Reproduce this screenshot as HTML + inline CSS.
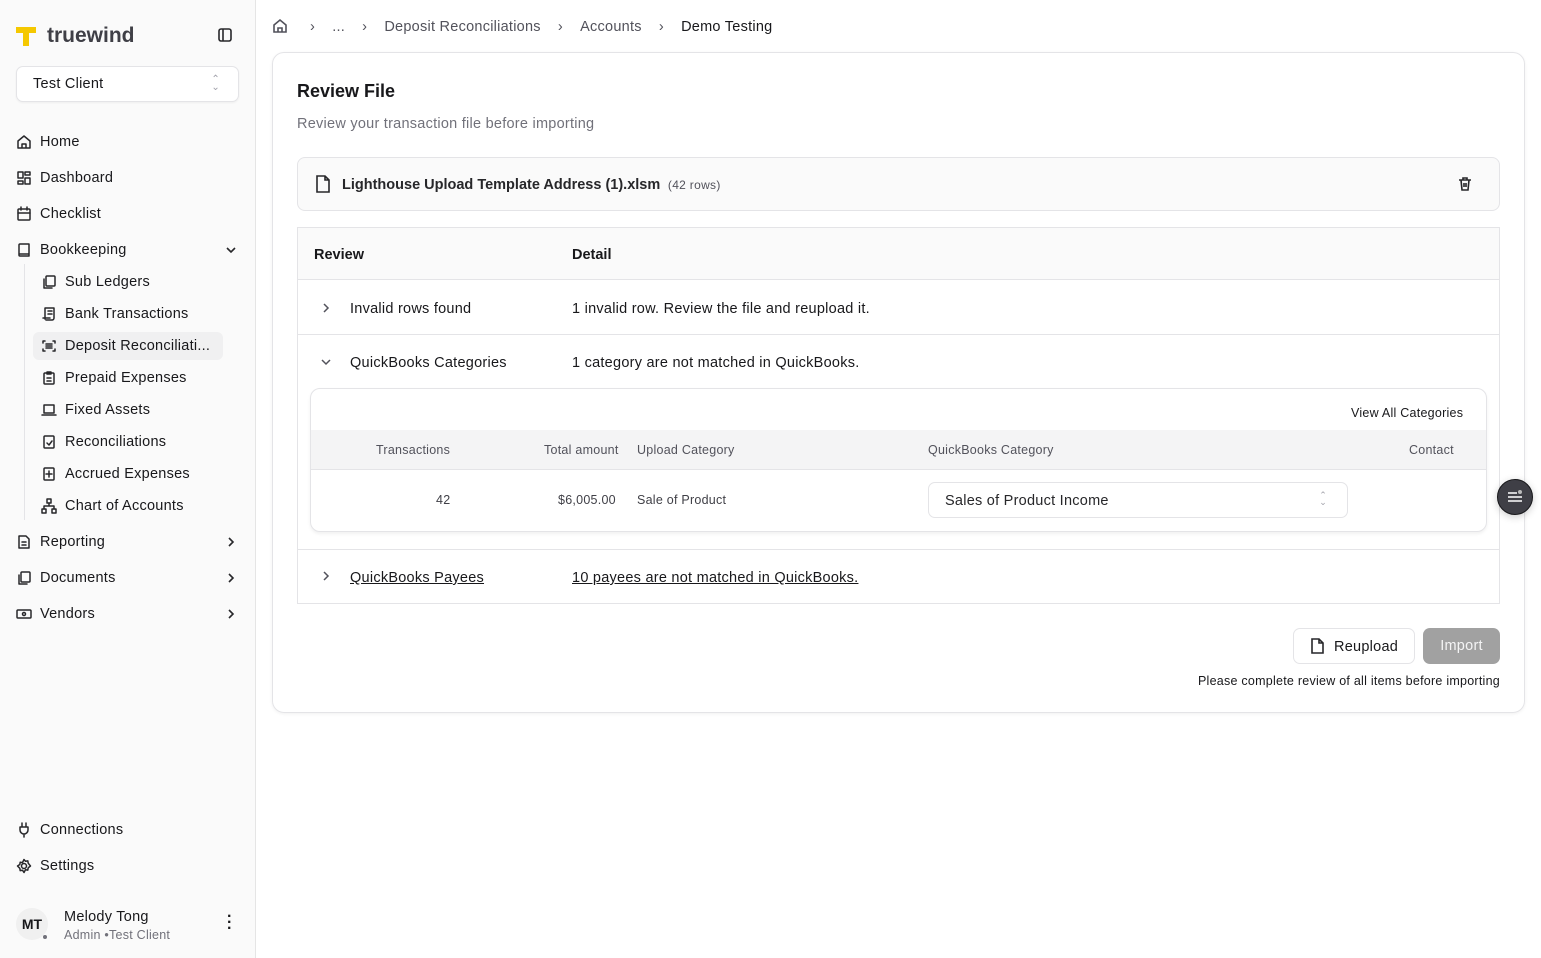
<!DOCTYPE html>
<html><head><meta charset="utf-8"><style>
*{box-sizing:border-box;margin:0;padding:0}
body{width:1541px;height:958px;font-family:"Liberation Sans",sans-serif;color:#18181b;background:#fff;position:relative;overflow:hidden;font-size:14px;letter-spacing:0.25px}
.t,.nav,.bc{margin-top:1px}
.sb{position:absolute;left:0;top:0;width:256px;height:958px;background:#fafafa;border-right:1px solid #e5e5e5}
.logo{position:absolute;left:15px;top:24px;display:flex;align-items:center}
.logo span{font-size:21px;font-weight:bold;color:#3f3f46;margin-left:10px;letter-spacing:0}
.sel{position:absolute;left:16px;top:66px;width:223px;height:36px;background:#fff;border:1px solid #e4e4e7;border-radius:7px;box-shadow:0 1px 2px rgba(0,0,0,.05);padding:9px 16px;font-size:14.5px}
.nav{position:absolute;left:16px;display:flex;align-items:center;font-size:14.5px;color:#18181b}
.nav svg{width:16px;height:16px;margin-right:8px;fill:none;stroke:#27272a;stroke-width:1.5;stroke-linecap:round;stroke-linejoin:round}
.chev{position:absolute;left:224px;width:14px;height:14px;fill:none;stroke:#27272a;stroke-width:1.6}
.sub{left:41px}
.main{position:absolute;left:272px;top:52px;width:1253px;height:661px;border:1px solid #e4e4e7;border-radius:12px;box-shadow:0 1px 3px rgba(0,0,0,.06)}
.bc{position:absolute;top:18px;font-size:14.5px;color:#52525b}
.t{position:absolute;white-space:nowrap}
</style></head><body>
<div class="sb">
<div class="logo"><svg width="22" height="22" viewBox="0 0 22 22"><path d="M1 2h20v6h-7v13h-6V8H1z" fill="#f5c800"/></svg><span>truewind</span></div>
<svg style="position:absolute;left:217px;top:27px" width="16" height="16" viewBox="0 0 16 16" fill="none" stroke="#27272a" stroke-width="1.6"><rect x="2" y="2" width="12" height="12" rx="2"/><path d="M6 2v12"/></svg>
<div class="sel">Test Client<span style="position:absolute;right:18px;top:9px;color:#a1a1aa;font-size:10px;line-height:8px">⌃<br>⌄</span></div>
<div class="nav" style="top:133px"><svg viewBox="0 0 16 16"><path d="M2 7l6-5 6 5v7H2z M6 14v-4h4v4"/></svg>Home</div>
<div class="nav" style="top:169px"><svg viewBox="0 0 16 16"><rect x="2" y="2" width="5" height="6"/><rect x="9" y="2" width="5" height="3"/><rect x="9" y="8" width="5" height="6"/><rect x="2" y="11" width="5" height="3"/></svg>Dashboard</div>
<div class="nav" style="top:205px"><svg viewBox="0 0 16 16"><rect x="2" y="3" width="12" height="11" rx="1"/><path d="M5 1v3M11 1v3M2 7h12"/></svg>Checklist</div>
<div class="nav" style="top:241px"><svg viewBox="0 0 16 16"><path d="M3 13V3a1 1 0 011-1h9v12H4a1 1 0 01-1-1zM3 12h10"/></svg>Bookkeeping</div>
<svg class="chev" style="top:243px" viewBox="0 0 14 14"><path d="M3 5l4 4 4-4"/></svg>
<div style="position:absolute;left:24px;top:264px;width:1px;height:256px;background:#e4e4e7"></div>
<div style="position:absolute;left:33px;top:332px;width:190px;height:28px;background:#f0f0f1;border-radius:6px"></div>
<div class="nav sub" style="top:273px"><svg viewBox="0 0 16 16"><rect x="5" y="2" width="9" height="10" rx="1"/><path d="M3 5v9h8"/></svg>Sub Ledgers</div>
<div class="nav sub" style="top:305px"><svg viewBox="0 0 16 16"><path d="M4 2h9v10a2 2 0 01-2 2H5M4 2v11M7 5h4M7 8h4M2 12h7"/></svg>Bank Transactions</div>
<div class="nav sub" style="top:337px"><svg viewBox="0 0 16 16"><path d="M2 5V3h2M12 3h2v2M14 11v2h-2M4 13H2v-2M5 6h6M5 8h6M5 10h6"/></svg>Deposit Reconciliati...</div>
<div class="nav sub" style="top:369px"><svg viewBox="0 0 16 16"><rect x="3" y="3" width="10" height="11" rx="1"/><path d="M6 2h4v2H6zM6 8h4M6 11h4"/></svg>Prepaid Expenses</div>
<div class="nav sub" style="top:401px"><svg viewBox="0 0 16 16"><rect x="3" y="3" width="10" height="8"/><path d="M1 13h14"/></svg>Fixed Assets</div>
<div class="nav sub" style="top:433px"><svg viewBox="0 0 16 16"><rect x="3" y="2" width="10" height="12" rx="1"/><path d="M6 9l2 2 3-4"/></svg>Reconciliations</div>
<div class="nav sub" style="top:465px"><svg viewBox="0 0 16 16"><rect x="3" y="2" width="10" height="12" rx="1"/><path d="M8 5v6M5 8h6"/></svg>Accrued Expenses</div>
<div class="nav sub" style="top:497px"><svg viewBox="0 0 16 16"><rect x="6" y="1" width="4" height="4"/><rect x="1" y="11" width="4" height="4"/><rect x="11" y="11" width="4" height="4"/><path d="M3 11V8h10v3M8 5v3"/></svg>Chart of Accounts</div>
<div class="nav" style="top:533px"><svg viewBox="0 0 16 16"><path d="M3 2h7l3 3v9H3z M6 8h4M6 11h4"/></svg>Reporting</div>
<svg class="chev" style="top:535px" viewBox="0 0 14 14"><path d="M5 3l4 4-4 4"/></svg>
<div class="nav" style="top:569px"><svg viewBox="0 0 16 16"><rect x="5" y="2" width="9" height="10" rx="1"/><path d="M3 5v9h8"/></svg>Documents</div>
<svg class="chev" style="top:571px" viewBox="0 0 14 14"><path d="M5 3l4 4-4 4"/></svg>
<div class="nav" style="top:605px"><svg viewBox="0 0 16 16"><rect x="1" y="4" width="14" height="8" rx="1"/><circle cx="8" cy="8" r="1.5"/></svg>Vendors</div>
<svg class="chev" style="top:607px" viewBox="0 0 14 14"><path d="M5 3l4 4-4 4"/></svg>
<div class="nav" style="top:821px"><svg viewBox="0 0 16 16"><path d="M6 1v4M10 1v4M4 5h8v3a4 4 0 01-8 0zM8 12v3"/></svg>Connections</div>
<div class="nav" style="top:857px"><svg viewBox="0 0 16 16"><circle cx="8" cy="8" r="2.5"/><path d="M8 1.5l1.5 1.8 2.3-.4.4 2.3L14.5 8l-2.3 1.8-.4 2.3-2.3-.4L8 14.5l-1.5-2.3-2.3.4-.4-2.3L1.5 8l2.3-1.5.4-2.3 2.3.4z"/></svg>Settings</div>
<div style="position:absolute;left:16px;top:908px;width:32px;height:32px;border-radius:50%;background:#f0f0f0;font-size:14px;font-weight:bold;text-align:center;line-height:32px;letter-spacing:0">MT</div>
<div style="position:absolute;left:43px;top:935px;width:4px;height:4px;border-radius:50%;background:#71717a"></div>
<div class="t" style="left:64px;top:908px;font-size:14.5px">Melody Tong</div>
<div class="t" style="left:64px;top:927px;font-size:12.5px;color:#71717a">Admin •Test Client</div>
<div class="t" style="left:227px;top:913px;font-size:16px;font-weight:bold;line-height:6px">·<br>·<br>·</div>
</div>
<svg style="position:absolute;left:272px;top:18px" width="16" height="16" viewBox="0 0 16 16" fill="none" stroke="#52525b" stroke-width="1.6"><path d="M2 7l6-5 6 5v7H2z M6 14v-4h4v4"/></svg>
<div class="bc" style="left:310px">›&nbsp;&nbsp;&nbsp;&nbsp;...&nbsp;&nbsp;&nbsp;&nbsp;›&nbsp;&nbsp;&nbsp;&nbsp;Deposit Reconciliations&nbsp;&nbsp;&nbsp;&nbsp;›&nbsp;&nbsp;&nbsp;&nbsp;Accounts&nbsp;&nbsp;&nbsp;&nbsp;›&nbsp;&nbsp;&nbsp;&nbsp;<span style="color:#18181b">Demo Testing</span></div>
<div class="main"></div>
<div class="t" style="left:297px;top:80px;font-size:18px;font-weight:bold;letter-spacing:0">Review File</div>
<div class="t" style="left:297px;top:115px;font-size:14.5px;color:#71717a">Review your transaction file before importing</div>
<div style="position:absolute;left:297px;top:157px;width:1203px;height:54px;border:1px solid #e4e4e7;border-radius:8px;background:#fafafa"></div>
<svg style="position:absolute;left:315px;top:175px" width="16" height="18" viewBox="0 0 16 18" fill="none" stroke="#27272a" stroke-width="1.6"><path d="M2 1h8l4 4v12H2zM10 1v4h4"/></svg>
<div class="t" style="left:342px;top:176px;font-size:14.5px;font-weight:bold;color:#27272a;letter-spacing:0">Lighthouse Upload Template Address (1).xlsm <span style="font-weight:normal;font-size:12px;color:#52525b;letter-spacing:.3px">&nbsp;(42 rows)</span></div>
<svg style="position:absolute;left:1457px;top:176px" width="16" height="16" viewBox="0 0 16 16" fill="none" stroke="#27272a" stroke-width="1.6"><path d="M2 4h12M6 4V2h4v2M4 4l1 10h6l1-10M7 7v4M9 7v4"/></svg>
<div style="position:absolute;left:297px;top:227px;width:1203px;height:377px;border:1px solid #e4e4e7"></div>
<div style="position:absolute;left:298px;top:228px;width:1201px;height:52px;background:#fafafa;border-bottom:1px solid #e4e4e7"></div>
<div class="t" style="left:314px;top:246px;font-size:14.5px;font-weight:bold;letter-spacing:0">Review</div>
<div class="t" style="left:572px;top:246px;font-size:14.5px;font-weight:bold;letter-spacing:0">Detail</div>
<svg style="position:absolute;left:320px;top:302px" width="12" height="12" viewBox="0 0 12 12" fill="none" stroke="#52525b" stroke-width="1.5"><path d="M4 2l4 4-4 4"/></svg>
<div class="t" style="left:350px;top:300px;font-size:14.5px">Invalid rows found</div>
<div class="t" style="left:572px;top:300px;font-size:14.5px">1 invalid row. Review the file and reupload it.</div>
<div style="position:absolute;left:298px;top:334px;width:1201px;height:1px;background:#e4e4e7"></div>
<svg style="position:absolute;left:320px;top:356px" width="12" height="12" viewBox="0 0 12 12" fill="none" stroke="#52525b" stroke-width="1.5"><path d="M2 4l4 4 4-4"/></svg>
<div class="t" style="left:350px;top:354px;font-size:14.5px">QuickBooks Categories</div>
<div class="t" style="left:572px;top:354px;font-size:14.5px">1 category are not matched in QuickBooks.</div>
<div style="position:absolute;left:310px;top:388px;width:1177px;height:144px;border:1px solid #e4e4e7;border-radius:10px;box-shadow:0 2px 3px rgba(0,0,0,.06);overflow:hidden">
<div style="position:absolute;left:0;top:41px;width:100%;height:40px;background:#f4f4f5;border-bottom:1px solid #e4e4e7"></div>
</div>
<div class="t" style="left:1351px;top:405px;font-size:12.5px">View All Categories</div>
<div class="t" style="left:376px;top:442px;font-size:12.5px;color:#52525b">Transactions</div>
<div class="t" style="left:544px;top:442px;font-size:12.5px;color:#52525b">Total amount</div>
<div class="t" style="left:637px;top:442px;font-size:12.5px;color:#52525b">Upload Category</div>
<div class="t" style="left:928px;top:442px;font-size:12.5px;color:#52525b">QuickBooks Category</div>
<div class="t" style="left:1409px;top:442px;font-size:12.5px;color:#52525b">Contact</div>
<div class="t" style="left:436px;top:492px;font-size:12.5px;color:#3f3f46">42</div>
<div class="t" style="left:558px;top:492px;font-size:12.5px;color:#3f3f46">$6,005.00</div>
<div class="t" style="left:637px;top:492px;font-size:12.5px;color:#3f3f46">Sale of Product</div>
<div style="position:absolute;left:928px;top:482px;width:420px;height:36px;border:1px solid #e4e4e7;border-radius:7px;padding:10px 16px;font-size:14.5px;color:#27272a">Sales of Product Income<span style="position:absolute;right:20px;top:9px;color:#a1a1aa;font-size:9px;line-height:7px">⌃<br>⌄</span></div>
<div style="position:absolute;left:298px;top:549px;width:1201px;height:1px;background:#e4e4e7"></div>
<svg style="position:absolute;left:320px;top:570px" width="12" height="12" viewBox="0 0 12 12" fill="none" stroke="#52525b" stroke-width="1.5"><path d="M4 2l4 4-4 4"/></svg>
<div class="t" style="left:350px;top:569px;font-size:14.5px;text-decoration:underline">QuickBooks Payees</div>
<div class="t" style="left:572px;top:569px;font-size:14.5px;text-decoration:underline">10 payees are not matched in QuickBooks.</div>
<div style="position:absolute;left:1293px;top:628px;width:122px;height:36px;border:1px solid #e4e4e7;border-radius:7px;background:#fff"></div>
<svg style="position:absolute;left:1311px;top:638px" width="14" height="16" viewBox="0 0 14 16" fill="none" stroke="#27272a" stroke-width="1.6"><path d="M1 1h7l4 4v10H1zM8 1v4h4"/></svg>
<div class="t" style="left:1334px;top:638px;font-size:14.5px">Reupload</div>
<div style="position:absolute;left:1423px;top:628px;width:77px;height:36px;border-radius:7px;background:#a1a1a1;color:#f4f4f5;font-size:14.5px;text-align:center;line-height:37px">Import</div>
<div class="t" style="right:41px;top:673px;font-size:12.5px">Please complete review of all items before importing</div>
<div style="position:absolute;left:1497px;top:479px;width:36px;height:36px;border-radius:50%;background:#3f3f46;border:1px solid #18181b;box-shadow:0 2px 8px rgba(0,0,0,.2)"></div>
<svg style="position:absolute;left:1507px;top:489px" width="16" height="16" viewBox="0 0 16 16" stroke="#fff" stroke-width="1.4"><path d="M1 4h9M1 8h14M1 12h14"/><circle cx="13" cy="3" r="2" fill="#bbb" stroke="none"/></svg>
</body></html>
